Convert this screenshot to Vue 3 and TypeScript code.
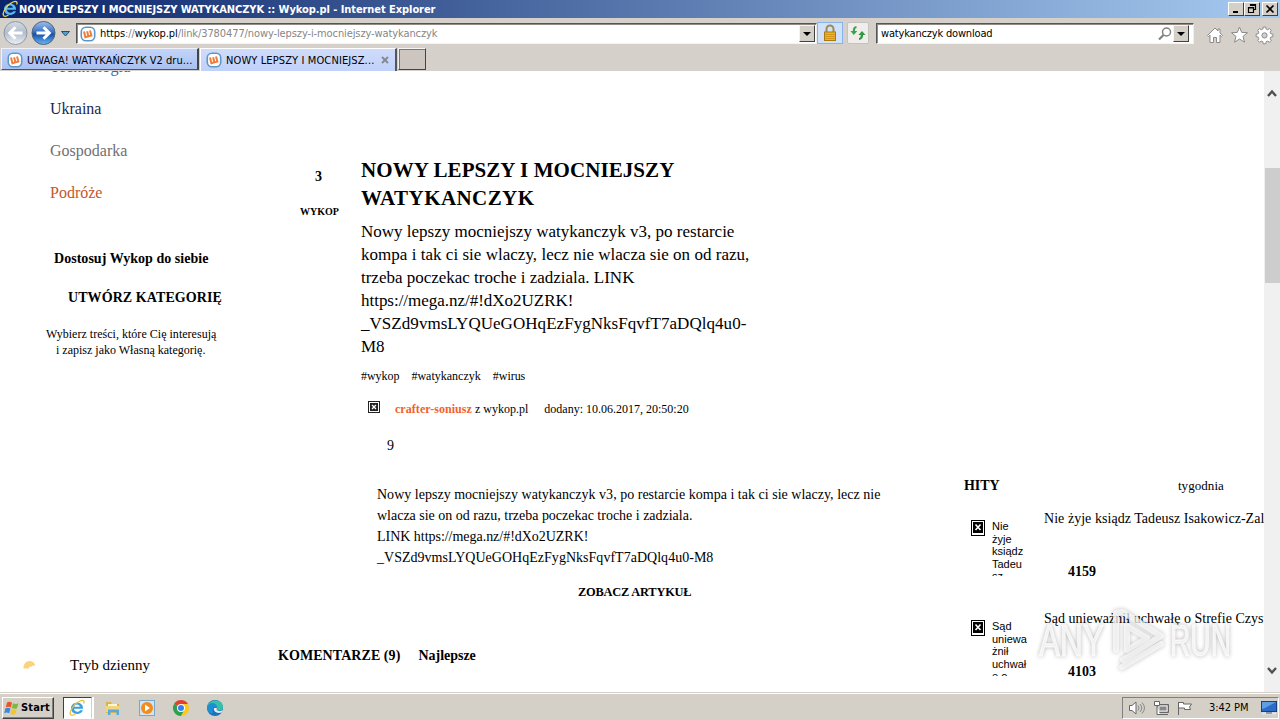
<script setup lang="ts">
interface Category { name: string; width: number; tone: string }
interface Hit { alt: string[]; title: string; width: number; votes: string }

/* Spreads a label's letters so that it takes exactly the given width. */
const vFit = {
  mounted(el: HTMLElement, binding: { value: number }) {
    const chars = (el.textContent ?? '').trim().length
    const natural = el.getBoundingClientRect().width
    el.style.letterSpacing = `${(binding.value - 0.6 - natural) / chars}px`
  },
}

const categories: Category[] = [
  { name: 'Technologia', width: 81, tone: 'blue' },
  { name: 'Ukraina', width: 52, tone: 'navy' },
  { name: 'Gospodarka', width: 78, tone: 'grey' },
  { name: 'Podróże', width: 53, tone: 'rust' },
]

const summary: [string, number][] = [
  ['Nowy lepszy mocniejszy watykanczyk v3, po restarcie', 374],
  ['kompa i tak ci sie wlaczy, lecz nie wlacza sie on od razu,', 389],
  ['trzeba poczekac troche i zadziala. LINK', 274],
  ['https://mega.nz/#!dXo2UZRK!', 213],
  ['_VSZd9vmsLYQUeGOHqEzFygNksFqvfT7aDQlq4u0-', 386],
  ['M8', 24],
]

const quote: [string, number][] = [
  ['Nowy lepszy mocniejszy watykanczyk v3, po restarcie kompa i tak ci sie wlaczy, lecz nie', 504],
  ['wlacza sie on od razu, trzeba poczekac troche i zadziala.', 316],
  ['LINK https://mega.nz/#!dXo2UZRK!', 212],
  ['_VSZd9vmsLYQUeGOHqEzFygNksFqvfT7aDQlq4u0-M8', 337],
]

const hits: Hit[] = [
  { alt: ['Nie', 'żyje', 'ksiądz', 'Tadeu', 'sz'], title: 'Nie żyje ksiądz Tadeusz Isakowicz-Zal', width: 221, votes: '4159' },
  { alt: ['Sąd', 'uniewa', 'żnił', 'uchwał', 'ę o'], title: 'Sąd unieważnił uchwałę o Strefie Czyst', width: 224, votes: '4103' },
]
</script>

<template>
  <div class="screen">
    <header class="titlebar">
      <svg class="ie" width="18" height="18" viewBox="0 0 18 18">
        <path d="M15 9.700H6c.2 3.500 5 3.800 6.100 1.500H15C12.600 17 2.800 15.800 3 9 3.200 2 15.500 1.500 15 9.700ZM6.200 7.700h5.600c-.4-2.900-5-2.900-5.600 0Z" fill="#58b9f2" />
        <path d="M3 16C.2 13.500 6 4.500 12 2c4.500-1.800 4.500 1 3.600 2.500M3 16c1 .7 3-.1 4.500-1" fill="none" stroke="#f0d44c" stroke-width="1.300" />
      </svg>
      <span v-fit="417" class="caption">NOWY LEPSZY I MOCNIEJSZY WATYKANCZYK :: Wykop.pl - Internet Explorer</span>
      <div class="winbtns">
        <button class="wb"><svg width="12" height="10"><path d="M3 8h5" stroke="#000" stroke-width="2" /></svg></button>
        <button class="wb"><svg width="12" height="10"><path d="M4.500 1v-.5h5v5H8M4 1.500h6M2.500 3.500h5v5h-5zM2 4h6" fill="none" stroke="#000" stroke-width="1.200" /></svg></button>
        <button class="wb close"><svg width="12" height="10"><path d="M2.500 1.500l7 7M9.500 1.500l-7 7" stroke="#000" stroke-width="1.700" /></svg></button>
      </div>
    </header>

    <nav class="navrow">
      <svg width="74" height="29" viewBox="0 0 74 29">
        <defs>
          <linearGradient id="back" x1="0" y1="0" x2="0" y2="1">
            <stop offset="0" stop-color="#d3dae3" /><stop offset=".5" stop-color="#b2bdcb" /><stop offset="1" stop-color="#eef2f6" />
          </linearGradient>
          <linearGradient id="fwd" x1="0" y1="0" x2="0" y2="1">
            <stop offset="0" stop-color="#9fc0ea" /><stop offset=".45" stop-color="#3a74c8" /><stop offset=".55" stop-color="#1650a8" /><stop offset="1" stop-color="#6db8f4" />
          </linearGradient>
        </defs>
        <circle cx="15.500" cy="15" r="11.500" fill="url(#back)" stroke="#8c98a6" />
        <circle cx="43.500" cy="15" r="11.500" fill="url(#fwd)" stroke="#51647e" />
        <path d="M22.500 15H10M15.500 9.200L9.700 15l5.800 5.800" fill="none" stroke="#fff" stroke-width="3" />
        <path d="M36.500 15H49M43.500 9.200L49.300 15l-5.800 5.800" fill="none" stroke="#fff" stroke-width="3" />
        <path d="M61.500 13.500h8l-4 4.500z" fill="#4fa3c8" stroke="#274c70" />
      </svg>
      <div class="field address">
        <svg class="fav" width="16" height="16" viewBox="0 0 16 16">
          <rect x="1.300" y="1.300" width="13.400" height="13.400" rx="4.500" fill="#fff" stroke="#5b98c8" stroke-width="1.600" />
          <path d="M4 5.600l1.400 5.600 3-.8L7.100 5.200M8.400 10.400l3-.8L10 4.400" fill="none" stroke="#ef7d3a" stroke-width="2" />
        </svg>
        <span v-fit="338" class="url"><b>https</b>://<b>wykop.pl</b>/link/3780477/nowy-lepszy-i-mocniejszy-watykanczyk</span>
        <button class="drop"><i></i></button>
      </div>
      <span class="tool lock">
        <svg width="16" height="18" viewBox="0 0 16 18">
          <path d="M4.500 9V5a3.500 3.500 0 0 1 7 0v4" fill="none" stroke="#a08a50" stroke-width="2" />
          <rect x="2.500" y="8" width="11" height="8.500" fill="#f0b420" stroke="#a87a14" />
          <path d="M3 10.500h10M3 12.500h10M3 14.500h10" stroke="#cf8f14" stroke-width=".8" />
        </svg>
      </span>
      <span class="tool refresh">
        <svg width="16" height="16" viewBox="0 0 16 16">
          <path d="M6.500 1v2C5.300 3.300 5 4.200 5 6h2.300L3.800 10 .5 6h2.300C2.800 3 3.800 1.200 6.500 1z" fill="#3aa648" />
          <path d="M9 15v-2c1.300-.3 1.700-1.200 1.700-3H8.400l3.600-4 3.500 4h-2.400c0 3-1.400 4.800-4.100 5z" fill="#2f9a3e" />
        </svg>
      </span>
      <div class="field search">
        <span v-fit="112" class="query">watykanczyk download</span>
        <svg class="lens" width="14" height="14" viewBox="0 0 14 14"><circle cx="8.500" cy="5" r="4" fill="none" stroke="#808080" stroke-width="1.500" /><path d="M5.500 8L1 12.500" stroke="#808080" stroke-width="2.200" /></svg>
        <button class="drop"><i></i></button>
      </div>
      <svg class="cmds" width="70" height="20" viewBox="0 0 70 20" fill="#fff" stroke="#8b8b8b">
        <path d="M1.500 10.500L9 3l3 3V4h2v4l2.500 2.500-1 1L14 10v7.500h-3.500v-5h-3v5H4V10l-1.500 1.500z" />
        <path d="M33.500 2l2.200 5.400 5.800.3-4.500 3.700 1.500 5.800-5-3.200-5 3.200 1.500-5.800L25.500 7.700l5.800-.3z" />
        <path d="M57.300 2h2.400l.5 2.100 1.500.6 1.900-1.100 1.700 1.700-1.100 1.900.6 1.500 2.100.5v2.400l-2.100.5-.6 1.500 1.100 1.900-1.700 1.700-1.900-1.100-1.500.6-.5 2.100h-2.400l-.5-2.100-1.500-.6-1.900 1.100-1.700-1.700 1.100-1.900-.6-1.500-2.100-.5V9.200l2.100-.5.600-1.500-1.100-1.900 1.700-1.700 1.900 1.100 1.500-.6z" />
        <circle cx="58.500" cy="10.400" r="2.600" fill="#d6d0ca" />
      </svg>
    </nav>

    <div class="tabs">
      <div class="tab">
        <svg class="fav" width="16" height="16" viewBox="0 0 16 16">
          <rect x="1.300" y="1.300" width="13.400" height="13.400" rx="4.500" fill="#fff" stroke="#5b98c8" stroke-width="1.600" />
          <path d="M4 5.600l1.400 5.600 3-.8L7.100 5.200M8.400 10.400l3-.8L10 4.400" fill="none" stroke="#ef7d3a" stroke-width="2" />
        </svg>
        <span v-fit="166">UWAGA! WATYKAŃCZYK V2 dru...</span>
      </div>
      <div class="tab active">
        <svg class="fav" width="16" height="16" viewBox="0 0 16 16">
          <rect x="1.300" y="1.300" width="13.400" height="13.400" rx="4.500" fill="#fff" stroke="#5b98c8" stroke-width="1.600" />
          <path d="M4 5.600l1.400 5.600 3-.8L7.100 5.200M8.400 10.400l3-.8L10 4.400" fill="none" stroke="#ef7d3a" stroke-width="2" />
        </svg>
        <span v-fit="149">NOWY LEPSZY I MOCNIEJSZ...</span>
        <svg class="x" width="8" height="8"><path d="M1 1l6 6M7 1L1 7" stroke="#85878f" stroke-width="1.800" /></svg>
      </div>
      <div class="newtab"></div>
    </div>

    <div class="page">
      <aside class="side">
        <ul>
          <li v-for="c in categories" :key="c.name"><span v-fit="c.width" :class="c.tone">{{ c.name }}</span></li>
        </ul>
        <p class="adapt"><b v-fit="155">Dostosuj Wykop do siebie</b></p>
        <p class="create"><b v-fit="154.500">UTWÓRZ KATEGORIĘ</b></p>
        <p class="hint"><span v-fit="171">Wybierz treści, które Cię interesują</span></p>
        <p class="hint second"><span v-fit="150">i zapisz jako Własną kategorię.</span></p>
        <p class="mode">
          <svg width="14" height="10" viewBox="0 0 14 10"><path d="M.5 8.500C.3 4 3 1 6.500 1c3 0 5.300 1.800 6 4.800-1.500-.8-3-.2-3.700 1-1.300-.5-2.500 0-3 1.700z" fill="#fcd27c" /></svg>
          <span v-fit="80.500">Tryb dzienny</span>
        </p>
      </aside>

      <main>
        <div class="entry">
          <div class="vote">
            <b class="count">3</b>
            <b v-fit="39.500" class="label">WYKOP</b>
          </div>
          <article>
            <h1><span v-fit="314">NOWY LEPSZY I MOCNIEJSZY</span><span v-fit="174">WATYKANCZYK</span></h1>
            <div class="summary"><span v-for="l in summary" :key="l[0]" v-fit="l[1]">{{ l[0] }}</span></div>
            <div class="tags"><span v-fit="39">#wykop</span><span v-fit="70">#watykanczyk</span><span v-fit="33">#wirus</span></div>
            <div class="author">
              <svg width="12" height="12"><rect x=".5" y=".5" width="11" height="11" fill="#fff" stroke="#222" /><rect x="2" y="2" width="8" height="8" fill="#222" /><path d="M4 4l4 4M8 4L4 8" stroke="#fff" stroke-width="1.300" /></svg>
              <b v-fit="77.500">crafter-soniusz</b><span v-fit="54" class="from">z wykop.pl</span><span v-fit="145" class="date">dodany: 10.06.2017, 20:50:20</span>
            </div>
            <div class="nine">9</div>
            <div class="quote"><span v-for="l in quote" :key="l[0]" v-fit="l[1]">{{ l[0] }}</span></div>
            <div class="more"><b v-fit="114">ZOBACZ ARTYKUŁ</b></div>
          </article>
        </div>
        <div class="comments"><b v-fit="123">KOMENTARZE (9)</b><b v-fit="58">Najlepsze</b></div>
      </main>

      <aside class="right">
        <div class="hitshead"><b v-fit="36">HITY</b><span v-fit="46.600">tygodnia</span></div>
        <div v-for="h in hits" :key="h.votes" class="hit">
          <svg class="broken" width="14" height="16"><rect x=".5" y=".5" width="13" height="15" fill="#fff" stroke="#000" /><rect x="2" y="2" width="10" height="11" fill="#000" /><path d="M4.500 4.500l5 5.500M9.500 4.500l-5 5.500" stroke="#fff" stroke-width="1.600" /></svg>
          <div class="alt"><span v-for="a in h.alt" :key="a">{{ a }}</span></div>
          <div class="info">
            <span v-fit="h.width">{{ h.title }}</span>
            <b>{{ h.votes }}</b>
          </div>
        </div>
      </aside>

      <div class="scroll">
        <svg width="16" height="16"><path d="M4 11l4-4.500L12 11" fill="none" stroke="#505050" stroke-width="2.400" /></svg>
        <div class="thumb"></div>
        <svg class="down" width="16" height="16"><path d="M4 5l4 4.500L12 5" fill="none" stroke="#505050" stroke-width="2.400" /></svg>
      </div>

      <svg class="mark" width="210" height="80" viewBox="0 0 210 80">
        <g fill="#fff" fill-opacity=".75" stroke="#fff" stroke-opacity=".75">
          <text x="9" y="56" textLength="65" lengthAdjust="spacingAndGlyphs">ANY</text>
          <text x="140" y="56" textLength="61" lengthAdjust="spacingAndGlyphs">RUN</text>
        </g>
        <g fill="none" stroke="#fff" stroke-opacity=".7" stroke-width="6" stroke-linejoin="round" stroke-linecap="round">
          <path d="M86 50V13l7-1 38 24-38 24" />
          <path d="M97 50V26l20 12-20 12M92 67l39-23" />
        </g>
      </svg>
    </div>

    <footer class="taskbar">
      <button class="start">
        <svg width="16" height="16" viewBox="0 0 16 16">
          <path d="M3 2.500c2-1 3.500-.8 5 .2L6.800 7.500c-1.600-1-3.300-1-5-.2z" fill="#e8572a" />
          <path d="M9 3.200c1.800 1 3.500 1 5.500.1L13 8.200c-1.800.8-3.500.7-5.200-.3z" fill="#7cb93c" />
          <path d="M1.500 8.300c1.800-.8 3.400-.7 5 .2L5.200 13.300c-1.600-1-3.200-1-5-.2z" fill="#3f86d8" />
          <path d="M7.500 9c1.800 1 3.400 1 5.200.2l-1.300 4.700c-1.800.8-3.500.8-5.200-.1z" fill="#f5c32c" />
        </svg>
        <b v-fit="29.600">Start</b>
      </button>
      <div class="running">
        <svg width="18" height="18" viewBox="0 0 18 18">
          <path d="M15 9.700H6c.2 3.500 5 3.800 6.100 1.500H15C12.600 17 2.800 15.800 3 9 3.200 2 15.500 1.500 15 9.700ZM6.200 7.700h5.600c-.4-2.900-5-2.900-5.600 0Z" fill="#3aa0e0" />
          <path d="M3 16C.2 13.500 6 4.500 12 2c4.500-1.800 4.500 1 3.600 2.500M3 16c1 .7 3-.1 4.500-1" fill="none" stroke="#eabf3c" stroke-width="1.300" />
        </svg>
      </div>
      <div class="quick">
        <svg width="18" height="18" viewBox="0 0 18 18">
          <path d="M2 3h5l1 2h7v9H2z" fill="#d9b44e" /><path d="M4 5h9v4H4z" fill="#fff6cf" /><path d="M2 7h13v6H2z" fill="#f0d680" />
          <path d="M4 16v-5.500h11V16h-2.500v-3h-6v3z" fill="#5aa9de" />
        </svg>
        <svg width="18" height="18" viewBox="0 0 18 18">
          <rect x="1.500" y="1.500" width="15" height="15" fill="#cfe4f5" stroke="#7ba6cc" /><circle cx="9" cy="9" r="6" fill="#f28a1c" /><path d="M7 5.500v7l5-3.500z" fill="#fff" />
        </svg>
        <svg width="18" height="18" viewBox="0 0 18 18">
          <path d="M9 9L2.070 5A8 8 0 0 1 15.930 5z" fill="#e2402f" /><path d="M9 9H9L2.070 5A8 8 0 0 0 9 17l3-5z" fill="#2ea04e" /><path d="M9 9V5h6.930A8 8 0 0 1 9 17l3.500-6z" fill="#fbc91b" />
          <circle cx="9" cy="9" r="4" fill="#fff" /><circle cx="9" cy="9" r="3" fill="#3b7ded" />
        </svg>
        <svg width="18" height="18" viewBox="0 0 18 18">
          <circle cx="9" cy="9" r="8" fill="#1a6fc0" /><path d="M1.200 8C2.500-.5 16.500-1 17 8c0 4-5 4.500-6.500 3 1.500-1.500 1-5-3-5C4 6 1.500 7.500 1.200 8z" fill="#38bfa8" />
          <path d="M1.200 8C3 2.500 10 2.500 11 8c-3-1.500-6 2-3.500 6.500C3 15 .6 11 1.200 8z" fill="#1f8fd4" /><path d="M8 9c-1 3.500 3 6 7.500 4.500L17 11c-2 1.500-5 1.500-6.500 0 .4-.6.500-1.500.2-2.200z" fill="#e6edf0" />
        </svg>
      </div>
      <div class="tray">
        <svg width="66" height="16" viewBox="0 0 66 16" fill="#fff" stroke="#666">
          <path d="M1.500 5.500h2.500L8 2v12L4 10.500H1.500z" />
          <path d="M10 5.500q2 2.500 0 5M12 4q3.500 4 0 8M14 2.500q5 5.500 0 11" fill="none" stroke="#888" />
          <path d="M29.500 4.500h11v8h-11z" fill="#aaa" /><path d="M31 6h8v5h-8z" fill="#888" stroke="#eee" /><path d="M32 14.500h8M26.500 1.500h5v4h-5zM29 5.500v9h3" />
          <path d="M50.500 2v13M50.500 2.500h5v1.500h8l-2 3 1 2.500h-6v-1.500h-6z" />
        </svg>
        <span v-fit="40" class="clock">3:42 PM</span>
        <svg class="desk" width="16" height="14" viewBox="0 0 16 14"><rect x=".5" y=".5" width="15" height="10" fill="#2c6cc8" stroke="#17407e" /><path d="M1 1h14L4 7 1 8z" fill="#5f9de4" /><path d="M1 12.500h14" stroke="#dce6f2" stroke-width="2" /><path d="M5 12h6" stroke="#456" /></svg>
      </div>
    </footer>
  </div>
</template>

<style>
html, body { margin: 0; overflow: hidden; background: #fff; }
</style>

<style scoped>
.screen { width: 1280px; height: 720px; display: flex; flex-direction: column; overflow: hidden; background: #fff; color: #000; font-family: "DejaVu Sans Condensed", "DejaVu Sans", sans-serif; font-size: 11px; font-stretch: condensed; }
.screen span, .screen b { white-space: nowrap; }
button { padding: 0; margin: 0; font: inherit; color: #000; box-sizing: border-box; }
svg { display: block; flex: none; }
p, ul, h1 { margin: 0; padding: 0; list-style: none; }

.titlebar { height: 18px; flex: none; display: flex; align-items: center; background: linear-gradient(90deg, #0a246a, #a6caf0); color: #fff; }
.ie { margin-left: 1px; }
.caption { font-weight: 700; line-height: 18px; padding-top: 1px; }
.winbtns { margin-left: auto; display: flex; padding-right: 2px; }
.wb { width: 16px; height: 14px; display: flex; align-items: center; justify-content: center; background: #d4d0c8; border: 1px solid; border-color: #fff #404040 #404040 #fff; }
.close { margin-left: 2px; }

.navrow { height: 30px; flex: none; display: flex; align-items: flex-start; background: #d6d0ca; }
.field { display: flex; align-items: center; background: #fff; box-sizing: border-box; height: 21px; margin-top: 5px; border: 1px solid; border-color: #555 #eee #f4f4f4 #555; box-shadow: inset 1px 1px #908c88; }
.address { width: 741px; margin-left: 2px; padding-left: 3px; }
.url { margin-left: 4px; color: #868686; }
.url b { font-weight: 400; color: #000; }
.drop { margin-left: auto; width: 16px; height: 17px; display: flex; align-items: center; justify-content: center; background: #d4d0c8; border: 1px solid; border-color: #f4f4f4 #404040 #404040 #f4f4f4; }
.drop i { border: 4px solid transparent; border-top-color: #000; border-bottom: 0; }
.address .drop { margin-right: 1px; }
.tool { display: flex; align-items: center; justify-content: center; box-sizing: border-box; height: 22px; margin-top: 4px; border: 1px solid; }
.lock { width: 26px; background: #cfe2fa; border-color: #86b4ea; }
.refresh { width: 22px; margin-left: 4px; background: #f0eeec; border-color: #c6c2be; border-radius: 2px; }
.search { width: 318px; margin-left: 7px; padding-left: 4px; }
.lens { margin-left: auto; margin-right: 1px; }
.search .drop { margin-left: 0; margin-right: 4px; }
.cmds { margin: 7px 0 0 12px; }

.tabs { height: 23px; flex: none; display: flex; background: #d6d0ca; padding-left: 1px; }
.tab { width: 198px; height: 22px; box-sizing: border-box; display: flex; align-items: center; padding: 1px 0 0 5px; background: linear-gradient(#c3d4fa, #a9c0f0); border: 1px solid #f0f2fa; border-right: 2px solid #444; border-bottom-color: #555; }
.tab span { margin-left: 4px; padding-top: 1px; }
.tab.active { margin-left: 1px; padding-top: 0; width: 197px; height: 23px; background: linear-gradient(#cfdbfb, #c0d2f9); border-bottom: 0; border-color: #fff #555 #fff #fff; }
.x { margin-left: 7px; }
.newtab { width: 28px; height: 22px; box-sizing: border-box; margin-left: 1px; background: #cdc6c0; border: 1px solid; border-color: #f4f4f4 #444 #444 #eee; box-shadow: inset 1px 1px #777; }

.page { position: relative; flex: 1; min-height: 0; display: flex; overflow: hidden; font-family: "Liberation Serif", serif; font-size: 14px; line-height: 20px; font-stretch: normal; }
.page b, .page span { display: inline-block; }
.side { width: 278px; flex: none; }
.side ul { margin-top: -25px; padding-left: 50px; font-size: 16px; line-height: 42px; }
.side li { height: 42px; }
.blue { color: #2f64b4; }
.navy { color: #1c2850; }
.grey { color: #707070; }
.rust { color: #c6552a; }
.adapt { margin-top: 35px; padding-left: 54px; height: 20px; }
.create { margin-top: 19px; padding-left: 68px; height: 20px; }
.hint { margin-top: 18px; padding-left: 46px; height: 16px; font-size: 12px; line-height: 16px; }
.hint.second { margin-top: 0; padding-left: 56px; }
.mode { margin-top: 297px; padding-left: 23px; height: 20px; font-size: 15px; display: flex; align-items: center; }
.mode span { margin-left: 33px; }

main { width: 686px; flex: none; padding-top: 85px; }
.entry { display: flex; }
.vote { width: 83px; flex: none; box-sizing: border-box; padding-top: 11px; }
.count { padding-left: 37px; height: 20px; }
.label { margin: 17px 0 0 22px; font-size: 10px; line-height: 16px; }
h1 { font-size: 21px; line-height: 28px; font-weight: 700; }
h1, .summary, .quote { display: flex; flex-direction: column; align-items: flex-start; }
.summary { margin-top: 8px; font-size: 17px; line-height: 23px; }
.tags { margin-top: 10px; display: flex; gap: 12px; font-size: 12px; line-height: 16px; }
.author { margin-top: 17px; padding-left: 7px; display: flex; font-size: 12px; line-height: 16px; }
.author b { margin-left: 15px; color: #f0622d; }
.from { margin-left: 3px; }
.date { margin-left: 16px; }
.nine { margin: 19px 0 0 26px; }
.quote { margin: 28px 0 0 16px; line-height: 21px; }
.more { margin: 14px 0 0 217px; height: 20px; font-size: 12.400px; }
.comments { margin-top: 44px; display: flex; gap: 18px; }

.right { width: 300px; flex: none; overflow: hidden; padding-top: 405px; }
.hitshead { display: flex; height: 20px; margin-bottom: 13px; }
.hitshead span { margin-left: 178.500px; font-size: 13px; }
.hit { height: 100px; display: flex; align-items: flex-start; padding-left: 7px; }
.broken { margin-top: 11px; }
.alt { width: 59px; height: 56px; flex: none; box-sizing: border-box; padding-left: 7px; margin-top: 11px; overflow: hidden; display: flex; flex-direction: column; font: 11px/12.600px "Liberation Sans", Arial, sans-serif; }
.info { display: flex; flex-direction: column; align-items: flex-start; }
.info b { margin: 33px 0 0 24px; }

.scroll { width: 16px; flex: none; background: #f0f0f0; display: flex; flex-direction: column; padding: 14px 0 13px; box-sizing: border-box; }
.thumb { height: 115px; margin: 67px 0 0 1px; background: #cdcdcd; }
.down { margin-top: auto; }
.mark { position: absolute; left: 1030px; top: 529px; filter: drop-shadow(0 0 2px rgba(0, 0, 0, .36)); }
.mark text { font: 400 45px "Liberation Sans", Arial, sans-serif; }

.taskbar { height: 28px; flex: none; box-sizing: border-box; display: flex; align-items: center; background: #d4d0c8; border-top: 1px solid #d4d0c8; box-shadow: inset 0 1px #fff; padding: 3px 1px 1px 2px; }
.start { width: 52px; height: 22px; display: flex; align-items: center; padding-left: 1px; background: #d4d0c8; border: 1px solid; border-color: #fff #404040 #404040 #fff; box-shadow: inset -1px -1px #808080; }
.start b { font-size: 11px; margin-left: 1px; }
.running { width: 29px; height: 22px; box-sizing: border-box; margin-left: 9px; padding-left: 4px; display: flex; align-items: center; background: #fff; border: 1px solid; border-color: #404040 #d4d0c8 #fff #404040; box-shadow: 2px 0 #fff; }
.quick { display: flex; gap: 16px; margin-left: 12px; }
.tray { margin-left: auto; width: 157px; height: 22px; box-sizing: border-box; display: flex; align-items: center; padding-left: 5px; border: 1px solid; border-color: #808080 #fff #fff #808080; }
.clock { margin-left: 15px; }
.desk { margin-left: auto; margin-right: 1px; }
</style>
